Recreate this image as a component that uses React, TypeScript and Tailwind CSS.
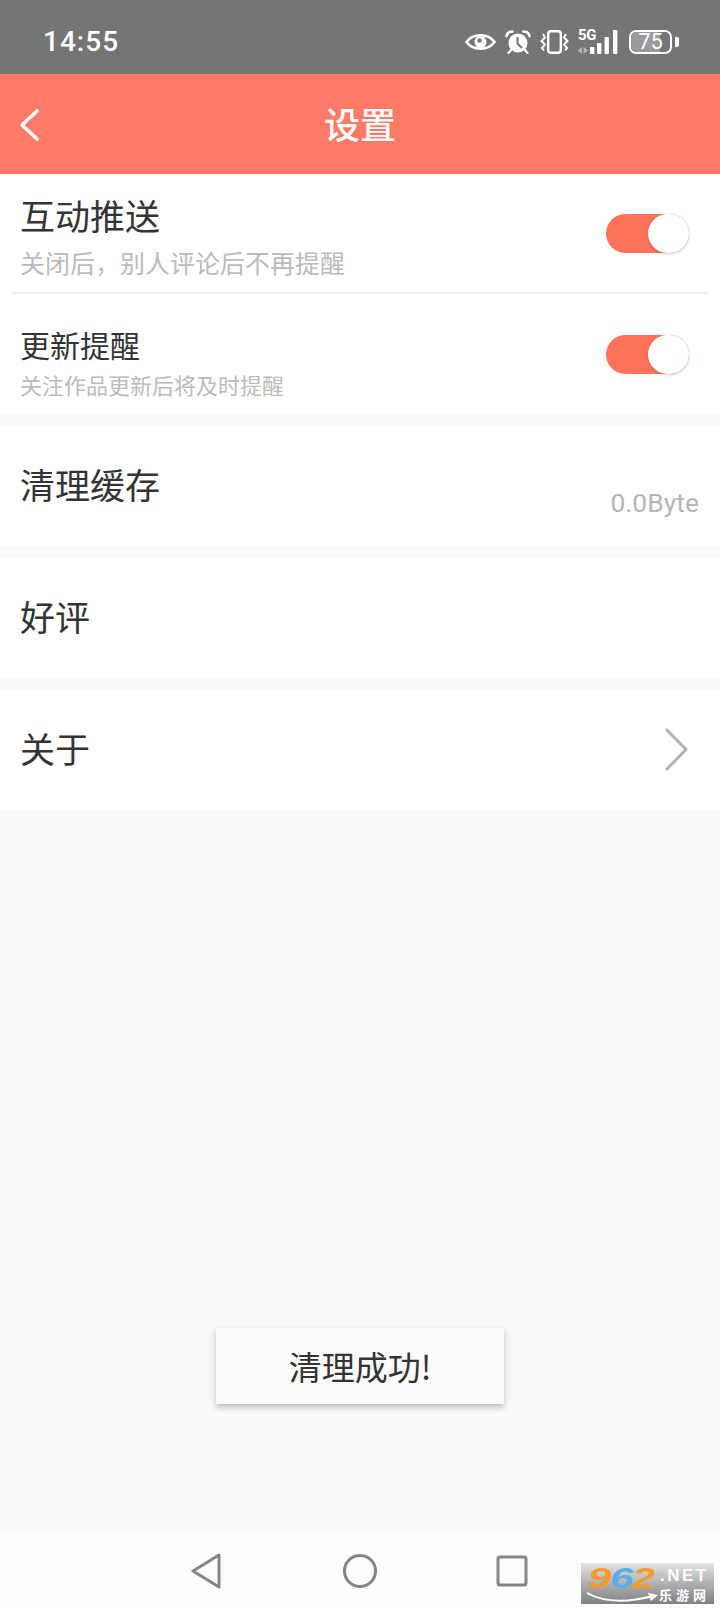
import type { ReactNode } from 'react'

const cjk = "font-['Noto_Sans_CJK_SC','Noto_Sans',sans-serif]"

function StatusIcons() {
  return (
    <div className="flex items-center text-white">
      <svg width="31" height="20" viewBox="0 0 31 20" className="mr-[9px]" fill="none">
        <path d="M1.5 10 C8 1 23 1 29.5 10 C23 19 8 19 1.5 10 Z" stroke="#fff" strokeWidth="2.6" />
        <circle cx="15.5" cy="10" r="6" fill="#fff" />
        <circle cx="14.5" cy="8.5" r="2.2" fill="#757575" />
      </svg>
      <svg width="26" height="24" viewBox="0 0 26 24" className="mr-[9px]">
        <circle cx="13" cy="13" r="9.5" fill="#fff" />
        <path d="M12.5 7 V13.5 L17 18" stroke="#757575" strokeWidth="2" fill="none" />
        <path d="M1.5 6 Q2.5 1.5 7.5 1.5 M24.5 6 Q23.5 1.5 18.5 1.5" stroke="#fff" strokeWidth="2.6" strokeLinecap="round" fill="none" />
        <path d="M6 20 L3.5 23 M20 20 L22.5 23" stroke="#fff" strokeWidth="2.2" strokeLinecap="round" />
      </svg>
      <svg width="29" height="24" viewBox="0 0 29 24" fill="none" className="mr-[8px]">
        <rect x="8.2" y="1.2" width="12.6" height="21.6" rx="2.8" stroke="#fff" strokeWidth="2.4" />
        <path d="M3 4 L5 7.5 L1.5 11 L5 14.5 L2 18 L4 20.5" stroke="#fff" strokeWidth="2" />
        <path d="M26 4 L24 7.5 L27.5 11 L24 14.5 L27 18 L25 20.5" stroke="#fff" strokeWidth="2" />
      </svg>
      <div className="relative w-[42px] h-[24px] mr-[10px]">
        <span className="absolute left-[1px] top-[-2px] font-['Roboto',sans-serif] font-bold text-[15px] leading-[15px] tracking-[-0.3px]">5G</span>
        <svg width="42" height="24" viewBox="0 0 42 24" className="absolute inset-0">
          <path d="M0.5 20.5 L5 17 V24 Z M6.5 17 L11 20.5 L6.5 24 Z" fill="#b5b5b5" />
          <rect x="13" y="17" width="4.4" height="7" rx="0.8" fill="#fff" />
          <rect x="20" y="13" width="4.4" height="11" rx="0.8" fill="#fff" />
          <rect x="27.5" y="7" width="4.4" height="17" rx="0.8" fill="#fff" />
          <rect x="36" y="0" width="4.4" height="24" rx="0.8" fill="#fff" />
        </svg>
      </div>
      <div className="relative flex items-center justify-center w-[43px] h-[24px] rounded-[7px] border-2 border-white overflow-hidden">
        <div className="absolute left-0 top-0 bottom-0 w-[75%] bg-[#9a9a9a]" />
        <span className="relative font-['Roboto',sans-serif] text-[22px] leading-none">75</span>
      </div>
      <div className="w-[4px] h-[10px] ml-[3px] rounded-r-[2px] bg-white" />
    </div>
  )
}

function Toggle() {
  return (
    <div className="relative w-[83px] h-[39px] rounded-full bg-[#ff735c]">
      <div className="absolute right-0 top-0 w-[41px] h-[39px] rounded-full bg-white shadow-[0_1px_3px_rgba(0,0,0,0.2)]" />
    </div>
  )
}

function Row({ children }: { children: ReactNode }) {
  return <div className="h-[120px] bg-white flex items-center justify-between pl-[20px]">{children}</div>
}

export default function App() {
  return (
    <div className={`relative w-[720px] h-[1610px] flex flex-col bg-[#f8f9fb] overflow-hidden ${cjk}`}>
      <div className="h-[74px] shrink-0 bg-[#757575] flex items-center justify-between pl-[43px] pr-[41px] pt-[10px]">
        <span className="font-['Roboto',sans-serif] font-medium text-white text-[28px] tracking-[1px] leading-none">14:55</span>
        <StatusIcons />
      </div>

      <div className="relative h-[100px] shrink-0 bg-[#ff7a66] flex items-center justify-center">
        <svg width="24" height="36" viewBox="0 0 24 36" fill="none" className="absolute left-[17px] top-[33px]">
          <path d="M20 4 L5 18 L20 32" stroke="#fff" strokeWidth="3.6" strokeLinecap="round" strokeLinejoin="round" />
        </svg>
        <span className="text-white text-[36px] font-medium leading-none mt-[-3px]">设置</span>
      </div>

      <div className="h-[118px] bg-white flex items-center justify-between pl-[20px] pr-[31px] pt-[1px]">
        <div className="flex flex-col mt-[4px]">
          <span className="text-[35px] leading-[46px] text-[#333]">互动推送</span>
          <span className="text-[25px] leading-[34px] text-[#bbb] mt-[7px]">关闭后，别人评论后不再提醒</span>
        </div>
        <Toggle />
      </div>
      <div className="bg-white px-[12px]">
        <div className="h-[2px] bg-[#efefef]" />
      </div>
      <div className="h-[120px] bg-white flex items-center justify-between pl-[20px] pr-[31px]">
        <div className="flex flex-col mt-[14px]">
          <span className="text-[30px] leading-[42px] text-[#333]">更新提醒</span>
          <span className="text-[22px] leading-[30px] text-[#bbb] mt-[4px]">关注作品更新后将及时提醒</span>
        </div>
        <Toggle />
      </div>

      <div className="h-[12px] shrink-0" />
      <Row>
        <span className="text-[35px] leading-none text-[#333] mt-[-6px]">清理缓存</span>
        <span className="font-['Roboto',sans-serif] text-[26.5px] leading-none text-[#b5b5b5] mr-[21px] mt-[35px]">0.0Byte</span>
      </Row>
      <div className="h-[12px] shrink-0" />
      <Row>
        <span className="text-[35px] leading-none text-[#333] mt-[-5px]">好评</span>
      </Row>
      <div className="h-[12px] shrink-0" />
      <Row>
        <span className="text-[35px] leading-none text-[#333] mt-[-5px]">关于</span>
        <svg width="25" height="43" viewBox="0 0 25 43" fill="none" className="mr-[31px] mt-[-1px]">
          <path d="M3 2 L22 21.5 L3 41" stroke="#b3b3b3" strokeWidth="3" strokeLinecap="round" strokeLinejoin="round" />
        </svg>
      </Row>

      <div className="flex-1" />

      <div className="h-[78px] shrink-0 bg-[#fdfdfd] flex items-center pl-[190px]">
        <svg width="32" height="36" viewBox="0 0 32 36" fill="none">
          <path d="M3 18 L29 2 V34 Z" stroke="#858585" strokeWidth="3" strokeLinejoin="round" />
        </svg>
        <svg width="34" height="34" viewBox="0 0 34 34" fill="none" className="ml-[121px]">
          <circle cx="17" cy="17" r="15.5" stroke="#858585" strokeWidth="3" />
        </svg>
        <svg width="32" height="32" viewBox="0 0 32 32" fill="none" className="ml-[119px]">
          <rect x="2" y="2" width="28" height="28" rx="2" stroke="#858585" strokeWidth="3" />
        </svg>
      </div>

      <div className="absolute left-[216px] top-[1328px] w-[288px] h-[76px] bg-[#fbfbfb] flex items-center justify-center shadow-[0_3px_6px_rgba(0,0,0,0.25)]">
        <span className="text-[33px] leading-none text-[#333]">清理成功!</span>
      </div>

      <div className="absolute left-[581px] top-[1563px] w-[133px] h-[41px] bg-gradient-to-b from-[#e4e4e4] via-[#b0b0b0] to-[#808080]">
        <span className="absolute left-[7px] top-0 inline-block origin-left scale-x-[1.4] font-['Liberation_Sans',sans-serif] font-bold italic text-[30px] leading-[30px] tracking-[-1px] whitespace-nowrap">
          <span className="text-[#f39a2e]">9</span>
          <span className="text-[#5aaee8]">6</span>
          <span className="text-[#f39a2e]">2</span>
        </span>
        <span className="absolute left-[79px] top-[4px] font-['Liberation_Sans',sans-serif] font-bold text-[17px] leading-[18px] tracking-[2.5px] text-white whitespace-nowrap">.NET</span>
        <span className="absolute left-[78px] top-[23px] text-[13px] leading-[18px] tracking-[4px] font-bold text-white whitespace-nowrap">乐游网</span>
        <svg width="74" height="12" viewBox="0 0 74 12" fill="none" className="absolute left-[4px] top-[28px]">
          <path d="M2 2 C20 12 45 11 68 5" stroke="#fff" strokeWidth="2" />
          <path d="M63 2 L73 4 L66 10 Z" fill="#fff" />
        </svg>
      </div>
    </div>
  )
}
